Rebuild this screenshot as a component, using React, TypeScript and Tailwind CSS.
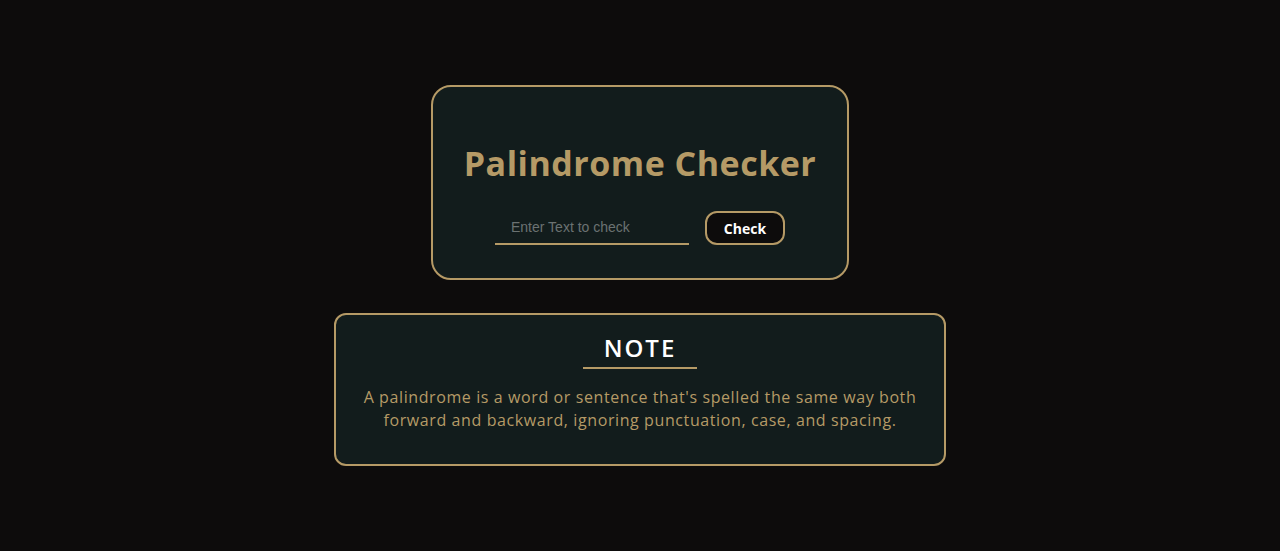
export default function App() {
  const font = { fontFamily: '"Open Sans", "Noto Sans", sans-serif' };
  return (
    <div className="min-h-screen w-full bg-[#0d0c0c] flex flex-col items-center justify-center gap-[33px]" style={font}>
      <div className="w-[418px] h-[195px] rounded-[20px] border-2 border-[#b59a66] bg-[#121c1c] flex flex-col items-center pt-[54px]">
        <h1 className="text-[34px] leading-[44px] font-bold text-[#b59a66] tracking-[0.5px]">Palindrome Checker</h1>
        <div className="flex items-center gap-4 mt-[26px]">
          <input
            placeholder="Enter Text to check"
            className="w-[194px] h-[34px] bg-transparent border-b-2 border-[#b59a66] pl-4 text-sm text-white placeholder:text-[#6b7272] outline-none"
            style={{ fontFamily: '"Liberation Sans", Arial, sans-serif' }}
          />
          <button className="w-[80px] h-[34px] rounded-[12px] border-2 border-[#b59a66] bg-[#0d0c0c] text-white text-[14px] font-bold">Check</button>
        </div>
      </div>
      <div className="w-[612px] h-[153px] rounded-[12px] border-2 border-[#b59a66] bg-[#121c1c] flex flex-col items-center pt-[17px]">
        <div className="text-[24px] leading-[32px] font-semibold text-white tracking-[2px]">NOTE</div>
        <div className="w-[114px] h-[2px] bg-[#b59a66] mt-[3px]"></div>
        <p className="mt-[17px] text-center text-[16px] leading-[23px] text-[#b59a66] tracking-[0.6px] px-6">
          A palindrome is a word or sentence that's spelled the same way both<br />forward and backward, ignoring punctuation, case, and spacing.
        </p>
      </div>
    </div>
  );
}
